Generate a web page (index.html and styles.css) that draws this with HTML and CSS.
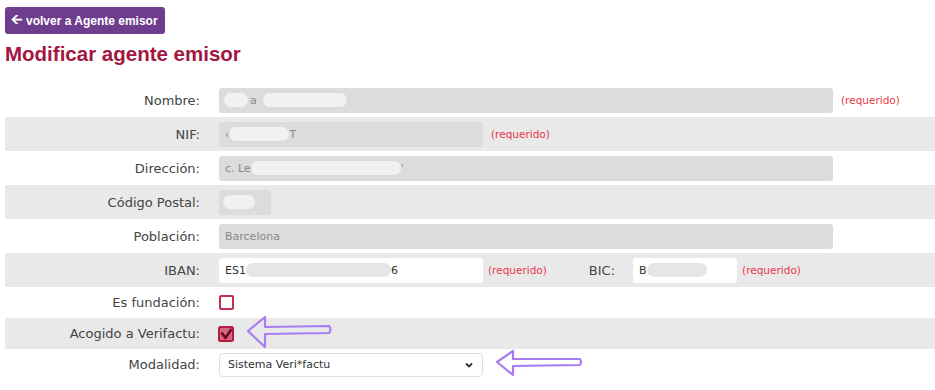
FILE: index.html
```html
<!DOCTYPE html>
<html lang="es">
<head>
  <meta charset="UTF-8" />
  <meta name="viewport" content="width=device-width, initial-scale=1.0"/>
  <title>Modificar agente emisor</title>
  <link rel="stylesheet" href="styles.css">
</head>
<body>
  <a class="back-btn" href="#"><span class="back-arrow">&#129128;</span>volver a Agente emisor</a>
  <h1>Modificar agente emisor</h1>

  <div class="form-table">
    <div class="row">
      <div class="label">Nombre:</div>
      <div class="field wide"><span class="blur b-sm"></span>a<span class="blur b-lg"></span></div>
      <span class="req">(requerido)</span>
    </div>
    <div class="row alt">
      <div class="label">NIF:</div>
      <div class="field short">&lsaquo;<span class="blur b-md"></span>T</div>
      <span class="req">(requerido)</span>
    </div>
    <div class="row">
      <div class="label">Dirección:</div>
      <div class="field wide">c. Le<span class="blur b-xl"></span>'</div>
    </div>
    <div class="row alt">
      <div class="label">Código Postal:</div>
      <div class="field tiny"><span class="blur b-xs"></span></div>
    </div>
    <div class="row">
      <div class="label">Población:</div>
      <div class="field wide">Barcelona</div>
    </div>
    <div class="row alt">
      <div class="label">IBAN:</div>
      <div class="field short white">ES1<span class="blur b-iban"></span>6</div>
      <span class="req">(requerido)</span>
      <div class="label-inline">BIC:</div>
      <div class="field bic white">B<span class="blur b-bic"></span></div>
      <span class="req">(requerido)</span>
    </div>
    <div class="row check-row">
      <div class="label">Es fundación:</div>
      <span class="checkbox"></span>
    </div>
    <div class="row check-row alt">
      <div class="label">Acogido a Verifactu:</div>
      <svg class="checkbox-svg" width="16" height="16" viewBox="0 0 16 16">
        <rect x="1" y="1" width="14" height="14" rx="1.5" fill="#d9667f" stroke="#b31c44" stroke-width="2"/>
        <path d="M3.5 6.5 L7.5 12 L13.5 3" fill="none" stroke="#6b0a24" stroke-width="2.6" stroke-linejoin="round"/>
      </svg>
    </div>
    <div class="row check-row">
      <div class="label">Modalidad:</div>
      <div class="select">
        <span>Sistema Veri*factu</span>
        <svg width="10" height="10" viewBox="0 0 10 10"><path d="M2 3.5 L5 6.5 L8 3.5" fill="none" stroke="#333" stroke-width="1.8"/></svg>
      </div>
    </div>
  </div>

  <svg class="annotations" width="935" height="390" viewBox="0 0 935 390">
    <path d="M248 331 L265 317 L265 327 L329 326 Q332 329.5 329 333 L265 334 L265 347 Z" />
    <path d="M497 362 L513 351 L513 359 L580 359 Q582 362 580 365 L513 366 L513 375 Z" />
  </svg>
</body>
</html>
```

FILE: styles.css
```css
body {
  font-family: "DejaVu Sans", Verdana, sans-serif;
  margin: 0;
  padding: 7px 0 0 5px;
  background-color: #fff;
  color: #444;
}
.back-btn {
  display: inline-flex;
  align-items: center;
  height: 27px;
  padding: 0 7px 0 6px;
  background-color: #6e3d8e;
  border-radius: 3px;
  color: #fff;
  font-family: "Liberation Sans", Arial, sans-serif;
  font-weight: bold;
  font-size: 12px;
  text-decoration: none;
  box-sizing: border-box;
}
.back-arrow {
  font-family: "DejaVu Sans", sans-serif;
  font-size: 14px;
  margin-right: 4px;
}
h1 {
  font-family: "Liberation Sans", Arial, sans-serif;
  font-size: 20.5px;
  color: #a3173f;
  margin: 8px 0 0;
  line-height: 24px;
}
.form-table {
  margin-top: 17px;
}
.row {
  display: flex;
  align-items: center;
  height: 34px;
}
.row.alt {
  background-color: #e9e9e9;
}
.row.check-row {
  height: 31px;
}
.label {
  width: 195px;
  text-align: right;
  font-size: 13px;
  color: #444;
  margin-right: 19px;
}
.label-inline {
  font-size: 13px;
  color: #444;
  margin: 0 18px 0 42px;
}
.field {
  height: 25px;
  box-sizing: border-box;
  background-color: #dcdcdc;
  border-radius: 3px;
  padding: 0 6px;
  font-size: 11px;
  color: #888;
  display: flex;
  align-items: center;
  white-space: nowrap;
  overflow: hidden;
}
.field.white {
  background-color: #fff;
  color: #333;
}
.wide { width: 614px; }
.short { width: 264px; }
.tiny { width: 52px; }
.bic { width: 104px; }
.req {
  font-size: 10.5px;
  color: #e8384a;
  margin-left: 8px;
}
.row.alt .field.white + .req {
  margin-left: 5px;
}
.blur {
  display: inline-block;
  height: 14px;
  border-radius: 7px;
  background-color: #f1f1f1;
}
.field.white .blur {
  background-color: #e6e6e6;
}
.b-sm { width: 24px; margin: 0 2px 0 -1px; }
.b-lg { width: 84px; margin-left: 6px; }
.b-md { width: 60px; }
.b-xl { width: 150px; }
.b-xs { width: 32px; margin-left: -2px; }
.b-iban { width: 145px; }
.b-bic { width: 60px; }
.checkbox {
  width: 11px;
  height: 11px;
  border: 2px solid #c0304f;
  border-radius: 2px;
  background-color: #fff;
}
.checkbox-svg {
  display: block;
  margin-left: -1px;
}
.select {
  width: 264px;
  height: 24px;
  box-sizing: border-box;
  border: 1px solid #ddd;
  border-radius: 4px;
  background-color: #fff;
  display: flex;
  align-items: center;
  justify-content: space-between;
  padding: 0 8px 0 8px;
  font-size: 11px;
  color: #333;
}
.annotations {
  position: absolute;
  top: 0;
  left: 0;
  pointer-events: none;
}
.annotations path {
  fill: none;
  stroke: #a97cf2;
  stroke-width: 2.2;
  stroke-linejoin: round;
}
```
